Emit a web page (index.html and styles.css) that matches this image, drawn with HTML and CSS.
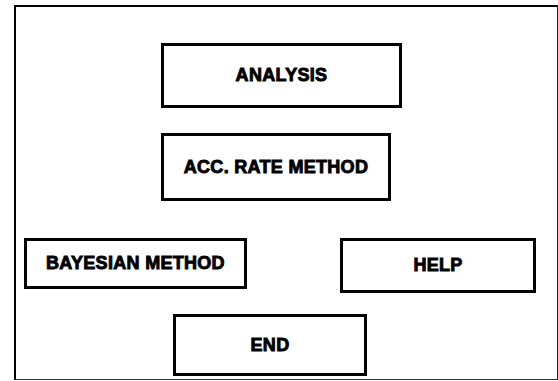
FILE: index.html
```html
<!DOCTYPE html>
<html lang="en">
<head>
  <meta charset="UTF-8" />
  <title>Menu</title>
  <link rel="stylesheet" href="styles.css">
</head>
<body>

<!-- Main menu frame -->
<div class="frame">
  <div class="row rowAnalysis">
    <div class="btn btnAnalysis">ANALYSIS</div>
  </div>
  <div class="row rowAcc">
    <div class="btn btnAcc">ACC. RATE METHOD</div>
  </div>
  <div class="row rowPair">
    <div class="btn btnBayes">BAYESIAN METHOD</div>
    <div class="btn btnHelp">HELP</div>
  </div>
  <div class="row rowEnd">
    <div class="btn btnEnd">END</div>
  </div>
</div>

</body>
</html>
```

FILE: styles.css
```css
* { margin: 0; padding: 0; box-sizing: border-box; }
body {
  background: #fff;
  font-family: "Liberation Sans", Arial, sans-serif;
  overflow: hidden;
}

/* Outer frame */
.frame {
  margin: 5px 0 0 14px;
  width: 544px;
  height: 375px;
  border-top: 2px solid #000;
  border-left: 2px solid #000;
  border-right: 1px solid #222;
  border-bottom: 1px solid #333;
  display: flex;
  flex-direction: column;
}

.row {
  display: flex;
}

.rowAnalysis { padding: 36px 0 0 145px; }
.rowAcc { padding: 25px 0 0 145px; }
.rowPair { padding: 37px 0 0 8px; gap: 93px; align-items: flex-start; }
.rowEnd { padding: 21px 0 0 157px; }

/* Buttons */
.btn {
  border: 3px solid #000;
  display: flex;
  align-items: center;
  justify-content: center;
  font-size: 18px;
  font-weight: bold;
  letter-spacing: 0.3px;
  color: #000;
  -webkit-text-stroke: 0.9px #000;
  white-space: nowrap;
}

.btnAnalysis { width: 241px; height: 65px; }
.btnAcc { width: 230px; height: 68px; }
.btnBayes { width: 223px; height: 51px; }
.btnHelp { width: 196px; height: 55px; }
.btnEnd { width: 194px; height: 62px; }
```
